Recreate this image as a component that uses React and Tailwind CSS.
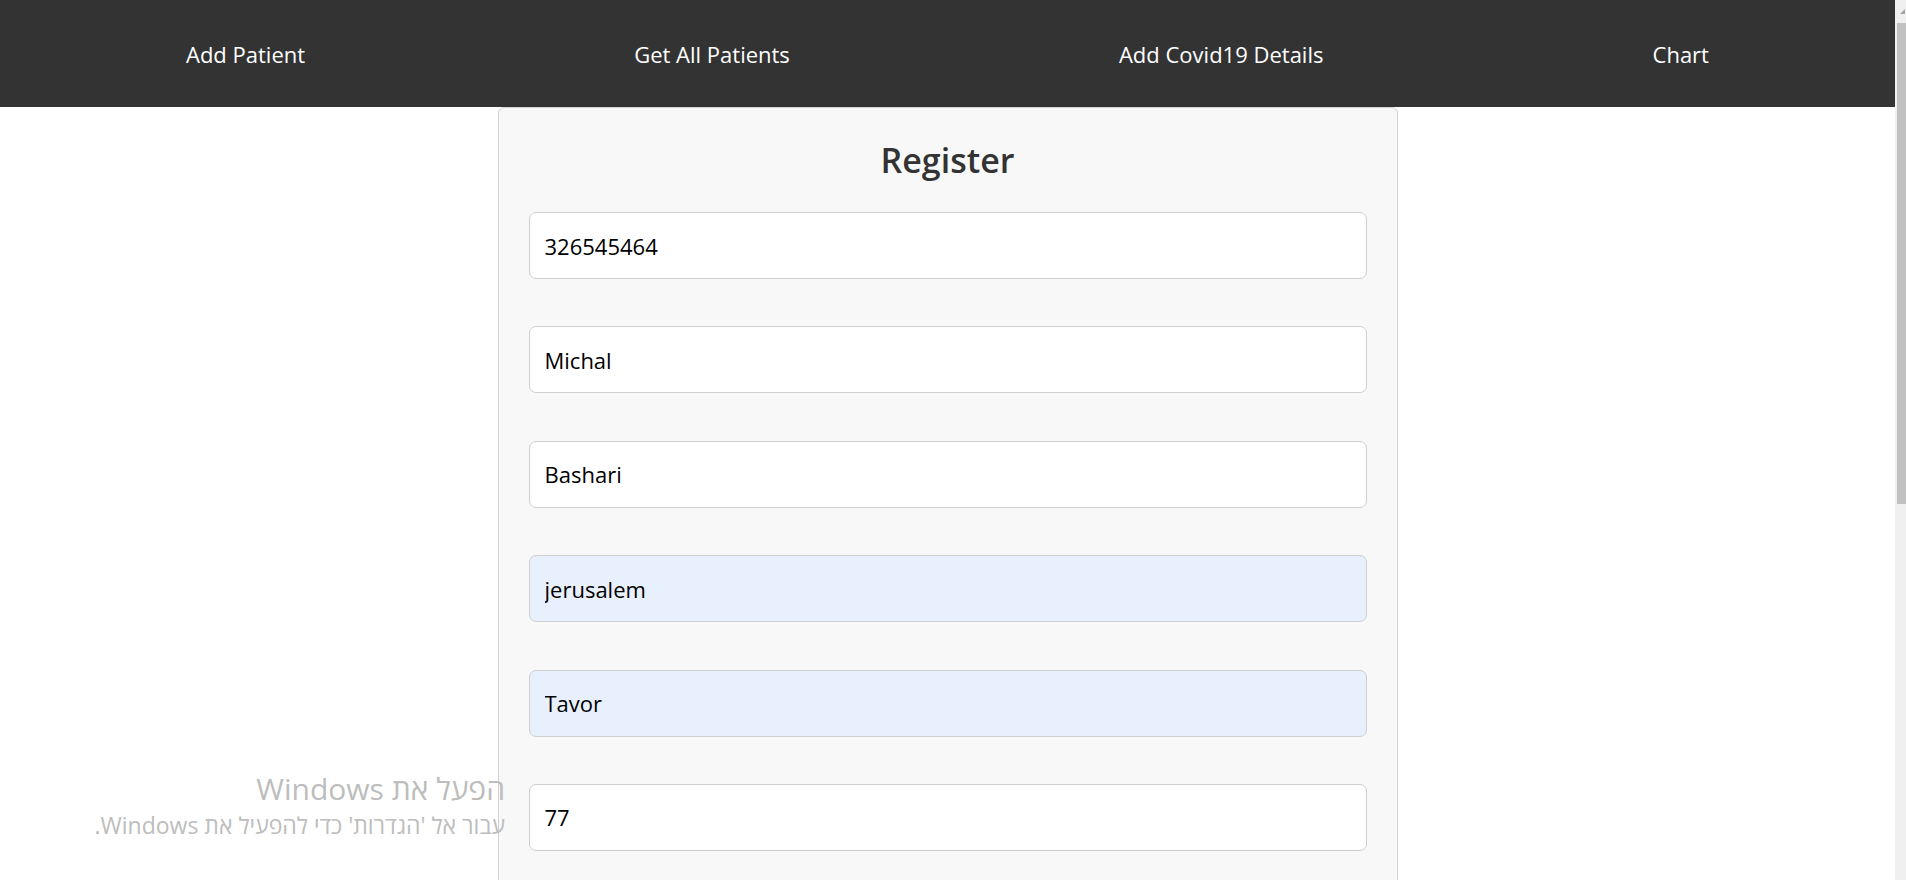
import React, { useState } from "react";

const links = ["Add Patient", "Get All Patients", "Add Covid19 Details", "Chart"];

const fields = [
    { name: "id", value: "326545464" },
    { name: "firstName", value: "Michal" },
    { name: "lastName", value: "Bashari" },
    { name: "city", value: "jerusalem", autofill: true },
    { name: "street", value: "Tavor", autofill: true },
    { name: "houseNumber", value: "77" },
    { name: "birthDate", value: "" },
    { name: "phone", value: "" },
];

export default function App() {
    const [form, setForm] = useState(
        Object.fromEntries(fields.map((f) => [f.name, f.value]))
    );

    const handleChange = (e) => setForm({ ...form, [e.target.name]: e.target.value });

    return (
        <div
            className="h-[880px] overflow-hidden flex bg-white relative"
            style={{ fontFamily: '"Open Sans", "DejaVu Sans", sans-serif' }}
        >
            <div className="flex-1 flex flex-col">
                {/* navbar */}
                <nav className="h-[107px] shrink-0 bg-[#333333] flex items-center justify-between px-[186px]">
                    {links.map((l) => (
                        <a key={l} href="#" className="text-white text-[22px] leading-none">
                            {l}
                        </a>
                    ))}
                </nav>

                {/* register card */}
                <div className="w-[900px] mx-auto bg-[#f8f8f8] border border-[#d2d2d2] rounded-t-[6px] px-[30px] pt-[31px] pb-10">
                    <h2 className="text-[34px] leading-[43px] font-semibold text-center text-[#333333] mb-[30px]">
                        Register
                    </h2>
                    <form className="flex flex-col gap-[47.4px]">
                        {fields.map((f) => (
                            <input
                                key={f.name}
                                name={f.name}
                                value={form[f.name]}
                                onChange={handleChange}
                                className={`h-[67px] w-full rounded-[7px] border border-[#cfcfcf] px-[15px] text-[22px] text-black outline-none ${
                                    f.autofill ? "bg-[#e8f0fe]" : "bg-white"
                                }`}
                            />
                        ))}
                    </form>
                </div>
            </div>

            {/* scrollbar */}
            <div className="w-[11px] shrink-0 bg-[#f0f0f0] flex flex-col items-end">
                <div className="h-[23px] w-full flex items-center justify-end pr-[1px]">
                    <div className="w-0 h-0 border-l-[5px] border-l-transparent border-b-[5px] border-b-[#a3a3a3]" />
                </div>
                <div className="w-[9px] h-[481px] bg-[#c1c1c1]" />
            </div>

            {/* windows activation watermark */}
            <div className="absolute left-0 top-[770px] w-[505px] text-right text-[#bdbdbd] pointer-events-none" dir="rtl">
                <div className="text-[30px] leading-[38px]">הפעל את Windows</div>
                <div className="text-[23px] leading-[34px]">עבור אל 'הגדרות' כדי להפעיל את Windows.</div>
            </div>
        </div>
    );
}
